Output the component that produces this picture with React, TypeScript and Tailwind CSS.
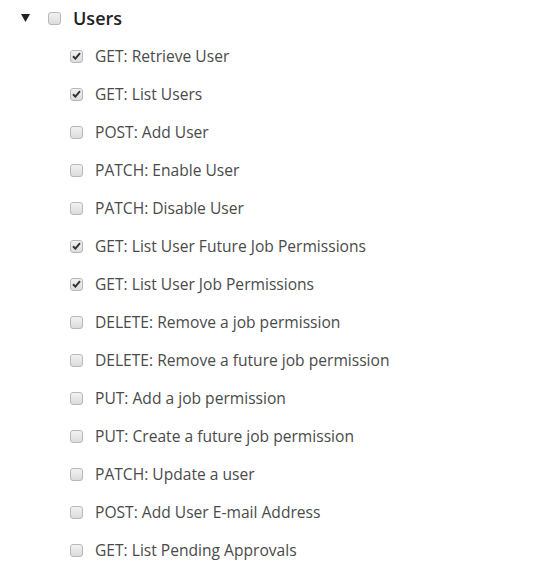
import React from 'react';

const endpoints: { label: string; checked: boolean }[] = [
  { label: 'GET: Retrieve User', checked: true },
  { label: 'GET: List Users', checked: true },
  { label: 'POST: Add User', checked: false },
  { label: 'PATCH: Enable User', checked: false },
  { label: 'PATCH: Disable User', checked: false },
  { label: 'GET: List User Future Job Permissions', checked: true },
  { label: 'GET: List User Job Permissions', checked: true },
  { label: 'DELETE: Remove a job permission', checked: false },
  { label: 'DELETE: Remove a future job permission', checked: false },
  { label: 'PUT: Add a job permission', checked: false },
  { label: 'PUT: Create a future job permission', checked: false },
  { label: 'PATCH: Update a user', checked: false },
  { label: 'POST: Add User E-mail Address', checked: false },
  { label: 'GET: List Pending Approvals', checked: false },
];

const Box: React.FC<{ checked?: boolean }> = ({ checked }) => (
  <span className="w-[13px] h-[13px] shrink-0 rounded-[3px] border border-[#b8b8b8] bg-gradient-to-b from-[#f2f2f2] to-[#dcdcdc] flex items-center justify-center">
    {checked && (
      <svg width="9" height="8" viewBox="0 0 9 8">
        <path d="M1 4.2 L3.4 6.6 L8 1.2" fill="none" stroke="#333" strokeWidth="2" />
      </svg>
    )}
  </span>
);

export default function App() {
  return (
    <div className="w-[539px] h-[565px] bg-white font-['Open_Sans',sans-serif] text-[#4a4a4a]">
      <div className="flex items-center h-[36px] pl-[21px]">
        <svg width="9" height="8" viewBox="0 0 9 8" className="mr-[18px]">
          <path d="M0 0 H9 L4.5 8 Z" fill="#222" />
        </svg>
        <Box />
        <span className="ml-[12px] text-[18px] font-semibold text-[#222]">Users</span>
      </div>
      <ul className="pl-[70px] pt-px">
        {endpoints.map((e) => (
          <li key={e.label} className="flex items-center h-[38px]">
            <Box checked={e.checked} />
            <span className="ml-[12px] pt-[2px] text-[15.6px]">{e.label}</span>
          </li>
        ))}
      </ul>
    </div>
  );
}
